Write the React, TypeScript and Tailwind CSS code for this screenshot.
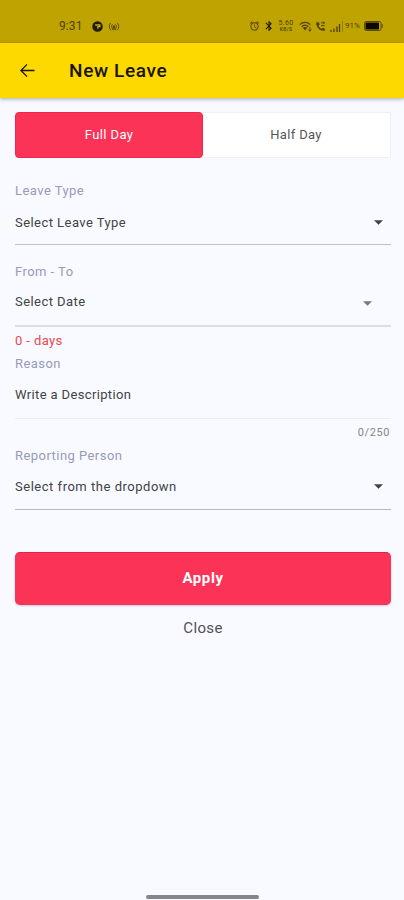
import { useState, ReactNode } from "react";
import { MdBluetooth, MdOutlineAlarm } from "react-icons/md";

interface FieldProps {
  label: string;
  children: ReactNode;
  className?: string;
}

// Label with its control below
function Field({ label, children, className = "" }: FieldProps) {
  return (
    <div className={className}>
      <p className="h-5 text-[13px] leading-5 tracking-[0.45px] text-[#979bb8]">{label}</p>
      {children}
    </div>
  );
}

function Caret({ className = "" }: { className?: string }) {
  return (
    <svg viewBox="0 0 10 5" className={`h-[5px] w-[9px] ${className}`} fill="currentColor">
      <path d="M0 0h10L5 5z" />
    </svg>
  );
}

function StatusBar() {
  return (
    <div className="flex h-[43px] items-center bg-[#bfa300] pt-[9px] pr-[21px] pl-[59px] text-[#4d4100]">
      <span className="w-[33px] text-[12px] leading-4 tracking-[0.1px]">9:31</span>
      <svg viewBox="0 0 12 12" className="h-[11px] w-[11px]">
        <circle cx="6" cy="6" r="5.7" fill="#211b00" />
        <path d="M3.4 4.4h5.2v1.8H6.4v2.2" fill="none" stroke="#c8ad14" strokeWidth="1.5" />
      </svg>
      <svg viewBox="0 0 12 10" className="ml-[5px] h-[9px] w-[12px]" fill="none" stroke="currentColor">
        <path d="M2.3 1C.3 3 .3 7 2.3 9M9.7 1c2 2 2 6 0 8M4.2 2.5c-1 1.5-1 3.5 0 5M7.8 2.5c1 1.5 1 3.5 0 5M6 4v5M4.3 9 6 4l1.7 5" />
      </svg>
      <div className="ml-auto flex items-center">
        <MdOutlineAlarm className="h-[12px] w-[11px]" />
        <MdBluetooth className="ml-[3px] h-[12px] w-[12px] text-[#211b00]" />
        <div className="ml-[2px] flex w-[18px] flex-col items-center">
          <span className="text-[7px] leading-[7px] tracking-[0.4px]">5.60</span>
          <span className="text-[5px] leading-[5px] font-medium tracking-[0.3px]">KB/S</span>
        </div>
        <svg viewBox="0 0 14 12" className="ml-[4px] h-[11px] w-[13px]" fill="none" stroke="currentColor">
          <path d="M.8 4C4 .8 9 .8 12.2 4M2.8 6.2c2.2-2.2 5.2-2.2 7.4 0" strokeWidth="1.4" />
          <path d="m4.2 7.4 2.3 2.8 2.3-2.8c-1.3-1.1-3.3-1.1-4.6 0z" fill="currentColor" strokeWidth=".3" />
          <path d="M11.8 6.5V11M10.2 9.4l1.600 1.800 1.600-1.800" />
        </svg>
        <svg viewBox="0 0 12 12" className="ml-[3px] h-[11px] w-[11px]" fill="none" stroke="currentColor">
          <path d="M1.600 1.500c-.4 5.200 3.600 9 8.900 9V8.200l-2.300-.6-1.200 1.200C5.400 8 4.300 6.800 3.600 5.300l1.200-1.200-.6-2.600z" fill="currentColor" strokeWidth=".4" />
          <path d="M6.500 2h4M6.500 5h4M9 .5 10.500 2 9 3.500" />
        </svg>
        <svg viewBox="0 0 13 11" className="ml-[4px] h-[11px] w-[13px]" stroke="currentColor">
          <path d="M1 9v2M4 7.500V11M7 5.500V11M9.500 3v8" strokeWidth="1.300" />
          <path d="M12.500 0v11" strokeWidth=".6" opacity=".6" />
        </svg>
        <span className="ml-[2px] w-[17px] text-[8px] leading-3">91%</span>
        <svg viewBox="0 0 19 10" className="ml-[2px] h-[10px] w-[19px]">
          <rect x=".5" y=".5" width="16.500" height="9" rx="1.800" fill="none" stroke="#5a4c00" />
          <rect x="1.500" y="1.500" width="13.500" height="7" rx=".6" fill="#0b0900" />
          <path d="M18.200 3.200v3.600" stroke="#5a4c00" />
        </svg>
      </div>
    </div>
  );
}

export default function App() {
  const [leave, setLeave] = useState<"full" | "half">("full");

  return (
    <div className="flex h-[900px] w-[404px] flex-col bg-[#f9faff] font-['Roboto','Liberation_Sans',sans-serif] text-[13px] text-[#424247]">
      <StatusBar />

      {/* Header */}
      <header className="flex h-[55px] shrink-0 items-center bg-[#fdd900] pl-5 text-[#171500] shadow-[0_1px_4px_rgba(60,60,100,0.45)]">
        <button aria-label="Back">
          <svg viewBox="0 0 16 16" className="h-[15px] w-[15px]" fill="none" stroke="currentColor" strokeWidth="1.400">
            <path d="M15.500 8H1.500M7.500 1.500 1 8l6.500 6.500" />
          </svg>
        </button>
        <h1 className="ml-[34px] text-[19px] leading-6 font-medium tracking-[0.65px]">New Leave</h1>
      </header>

      <main className="flex flex-col pt-[14px] pr-[13px] pl-[15px]">
        {/* Leave length */}
        <div className="flex h-[46px] border border-[#eff0f7] bg-white">
          <button
            onClick={() => setLeave("full")}
            className={`-my-px -ml-px w-[188px] rounded-[4px] text-[13px] tracking-[0.4px] ${
              leave === "full" ? "border border-[#f22449] bg-[#fa3357] text-white" : "text-[#55555a]"
            }`}
          >
            Full Day
          </button>
          <button
            onClick={() => setLeave("half")}
            className={`-my-px -mr-px flex-1 rounded-[4px] pr-[2px] text-[13px] tracking-[0.35px] ${
              leave === "half" ? "border border-[#f22449] bg-[#fa3357] text-white" : "text-[#55555a]"
            }`}
          >
            Half Day
          </button>
        </div>

        <Field label="Leave Type" className="mt-[23px]">
          <div className="mt-[4px] flex h-[40px] items-start justify-between border-b border-[#c0c1c6] pt-[8px] pr-[8px]">
            <span className="leading-5 tracking-[0.45px]">Select Leave Type</span>
            <Caret className="mt-[7px]" />
          </div>
        </Field>

        <Field label="From - To" className="mt-[17px]">
          <div className="flex h-[45px] items-start justify-between border-b-2 border-[#dcdde1] pt-[10px] pr-[19px]">
            <span className="leading-5 tracking-[0.45px]">Select Date</span>
            <Caret className="mt-[9px] text-[#77787d]" />
          </div>
        </Field>
        <p className="mt-[4px] leading-5 tracking-[0.4px] text-[#e7494c]">0 - days</p>

        <Field label="Reason" className="mt-[3px]">
          <div className="mt-[2px] h-[43px] border-b border-[#e9edf2] pt-[9px]">
            <span className="block leading-5 tracking-[0.36px]">Write a Description</span>
          </div>
        </Field>
        <p className="mt-[4px] pr-px text-right text-[11px] leading-5 tracking-[0.6px] text-[#85868c]">0/250</p>

        <Field label="Reporting Person" className="mt-[3px]">
          <div className="mt-[4px] flex h-[40px] items-start justify-between border-b border-[#b9babd] pt-[7px] pr-[8px]">
            <span className="leading-5 tracking-[0.52px]">Select from the dropdown</span>
            <Caret className="mt-[7px]" />
          </div>
        </Field>

        <button className="mt-[42px] h-[53px] rounded-[5px] border-t border-[#e3224a] bg-[#fa3357] pb-px text-[15px] font-bold tracking-[0.6px] text-white shadow-[0_1px_2px_rgba(90,90,120,0.3)]">
          Apply
        </button>
        <button className="mt-[13px] text-[15px] leading-5 tracking-[0.35px] text-[#505156]">Close</button>
      </main>

      {/* Gesture bar */}
      <div className="mt-auto mb-[1px] ml-[146px] h-[4px] w-[113px] rounded-full bg-[#85868a]" />
    </div>
  );
}
